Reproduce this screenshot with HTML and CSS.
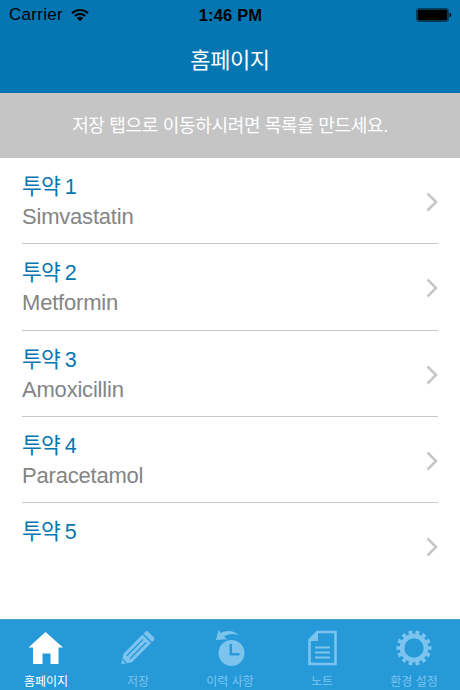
FILE: index.html
```html
<!DOCTYPE html>
<html lang="ko">
<head>
    <meta charset="UTF-8">
    <meta name="viewport" content="width=device-width, initial-scale=1.0">
    <title>홈페이지</title>
    <link rel="stylesheet" href="styles.css">
</head>
<body>
    <header class="header">
        <div class="status-bar">
            <div class="carrier">
                <span>Carrier</span>
                <svg class="wifi" width="18" height="14" viewBox="0 0 18 14">
                    <path d="M1 5.2a11.5 11.5 0 0 1 16 0M3.9 8.1a7.4 7.4 0 0 1 10.2 0" fill="none" stroke="#000" stroke-width="2.1"/>
                    <path d="M9 13.3L5.8 10a4.6 4.6 0 0 1 6.4 0z"/>
                </svg>
            </div>
            <div class="time">1:46 PM</div>
            <div class="battery">
                <svg width="36" height="14" viewBox="0 0 36 14">
                    <rect x=".5" y=".5" width="32" height="13" rx="2.2" fill="none" stroke="#033a59"/>
                    <rect x="1.5" y="1.5" width="30" height="11" rx="1"/>
                    <path d="M33.6 4.700c2.300.6 2.300 4 0 4.600z"/>
                </svg>
            </div>
        </div>
        <h1>홈페이지</h1>
    </header>

    <div class="notice">저장 탭으로 이동하시려면 목록을 만드세요.</div>

    <ul class="med-list">
        <li class="med">
            <div><h2>투약 1</h2><p>Simvastatin</p></div>
            <svg class="chevron" width="12" height="20" viewBox="0 0 12 20"><path d="M1.5 1.5L10 10l-8.5 8.5"/></svg>
        </li>
        <li class="med">
            <div><h2>투약 2</h2><p>Metformin</p></div>
            <svg class="chevron" width="12" height="20" viewBox="0 0 12 20"><path d="M1.5 1.5L10 10l-8.5 8.5"/></svg>
        </li>
        <li class="med">
            <div><h2>투약 3</h2><p>Amoxicillin</p></div>
            <svg class="chevron" width="12" height="20" viewBox="0 0 12 20"><path d="M1.5 1.5L10 10l-8.5 8.5"/></svg>
        </li>
        <li class="med">
            <div><h2>투약 4</h2><p>Paracetamol</p></div>
            <svg class="chevron" width="12" height="20" viewBox="0 0 12 20"><path d="M1.5 1.5L10 10l-8.5 8.5"/></svg>
        </li>
        <li class="med">
            <div><h2>투약 5</h2></div>
            <svg class="chevron" width="12" height="20" viewBox="0 0 12 20"><path d="M1.5 1.5L10 10l-8.5 8.5"/></svg>
        </li>
    </ul>

    <nav class="tab-bar">
        <a class="tab active">
            <svg width="36" height="36" viewBox="0 0 36 36">
                <path fill="currentColor" d="M17.5 2L35 17.500h-4.500V34h-8V23.500h-8V34H5V17.500H.5z"/>
            </svg>
            <span>홈페이지</span>
        </a>
        <a class="tab">
            <svg width="36" height="36" viewBox="0 0 36 36">
                <g transform="translate(1.300 34.300) rotate(-45)">
                    <path fill="currentColor" d="M0 0L9-6H36V6H9z"/>
                    <path fill="currentColor" d="M37.500-6H40q2 0 2 2V4q0 2-2 2h-2.500z"/>
                    <path d="M4.500-2.700V2.700M10-2.200H33M10 2.200H33" fill="none" stroke="#2699d9" stroke-width="1.300"/>
                </g>
            </svg>
            <span>저장</span>
        </a>
        <a class="tab">
            <svg width="36" height="36" viewBox="0 0 36 36">
                <circle cx="19.500" cy="23" r="13" fill="currentColor"/>
                <path d="M18.800 14v10.200h8.700" fill="none" stroke="#2699d9" stroke-width="2.500"/>
                <path fill="currentColor" d="M6.500 0L4 10l11-.8-3-2.600c4-2.700 9-3.500 15.500-1C23 .5 14.500-.5 8.500 3z"/>
            </svg>
            <span>이력 사항</span>
        </a>
        <a class="tab">
            <svg width="36" height="36" viewBox="0 0 36 36">
                <path d="M13.300 2H31.500V34H5.500V10z" fill="none" stroke="currentColor" stroke-width="2.600"/>
                <path fill="currentColor" d="M14 1v10H5z"/>
                <path d="M11 17.500h15M11 22.500h15M11 27.500h15" stroke="currentColor" stroke-width="1.800"/>
            </svg>
            <span>노트</span>
        </a>
        <a class="tab">
            <svg width="36" height="36" viewBox="0 0 36 36">
                <circle cx="18" cy="18" r="12" fill="none" stroke="currentColor" stroke-width="4.600"/>
                <circle cx="18" cy="18" r="15.500" pathLength="140" fill="none" stroke="currentColor" stroke-width="4" stroke-dasharray="5.400 4.600" stroke-dashoffset="2.700"/>
            </svg>
            <span>환경 설정</span>
        </a>
    </nav>
</body>
</html>
```

FILE: styles.css
```css
* {
    box-sizing: border-box;
}
body {
    margin: 0;
    height: 690px;
    display: flex;
    flex-direction: column;
    overflow: hidden;
    background: #fff;
    font-family: "Liberation Sans", "Noto Sans CJK KR", sans-serif;
}
h1, h2, p, ul {
    margin: 0;
    padding: 0;
    font-weight: normal;
}
.header {
    height: 93px;
    flex: none;
    background: #0576b1;
}
.status-bar {
    display: grid;
    grid-template-columns: 1fr auto 1fr;
    align-items: center;
    height: 30px;
    padding: 0 8px 0 9px;
    font-size: 17px;
    color: #000;
}
.carrier {
    display: flex;
    align-items: center;
    gap: 8px;
    letter-spacing: 0.3px;
}
.time {
    font-weight: bold;
    font-size: 16.5px;
    letter-spacing: 0.15px;
}
.battery {
    display: flex;
    justify-content: flex-end;
}
.header h1 {
    line-height: 62px;
    text-align: center;
    font-size: 22px;
    letter-spacing: -0.4px;
    color: #fff;
}
.notice {
    height: 65px;
    flex: none;
    line-height: 67px;
    text-align: center;
    font-size: 18px;
    letter-spacing: -0.32px;
    color: #fff;
    background: #c5c5c5;
}
.med-list {
    flex: 1;
    padding: 0 22px;
    list-style: none;
}
.med {
    display: flex;
    justify-content: space-between;
    height: 86.25px;
    padding-top: 14px;
    border-bottom: 1px solid #c8c8c8;
}
.med:last-child {
    border-bottom: none;
}
.med h2 {
    font-size: 21.5px;
    line-height: 30px;
    letter-spacing: -0.9px;
    color: #0576b1;
}
.med p {
    font-size: 22px;
    line-height: 30px;
    letter-spacing: -0.2px;
    color: #848484;
}
.chevron {
    margin-top: 20px;
    fill: none;
    stroke: #c7c7c7;
    stroke-width: 2.6;
}
.tab-bar {
    display: grid;
    grid-template-columns: repeat(5, 1fr);
    height: 71px;
    flex: none;
    border-top: 1px solid #4f9dca;
    background: #2699d9;
}
.tab {
    display: flex;
    flex-direction: column;
    align-items: center;
    padding-top: 10px;
    color: #7cc4ee;
}
.tab.active {
    color: #fff;
}
.tab span {
    margin-top: 7px;
    font-size: 12px;
    line-height: 18px;
    white-space: nowrap;
}
```
